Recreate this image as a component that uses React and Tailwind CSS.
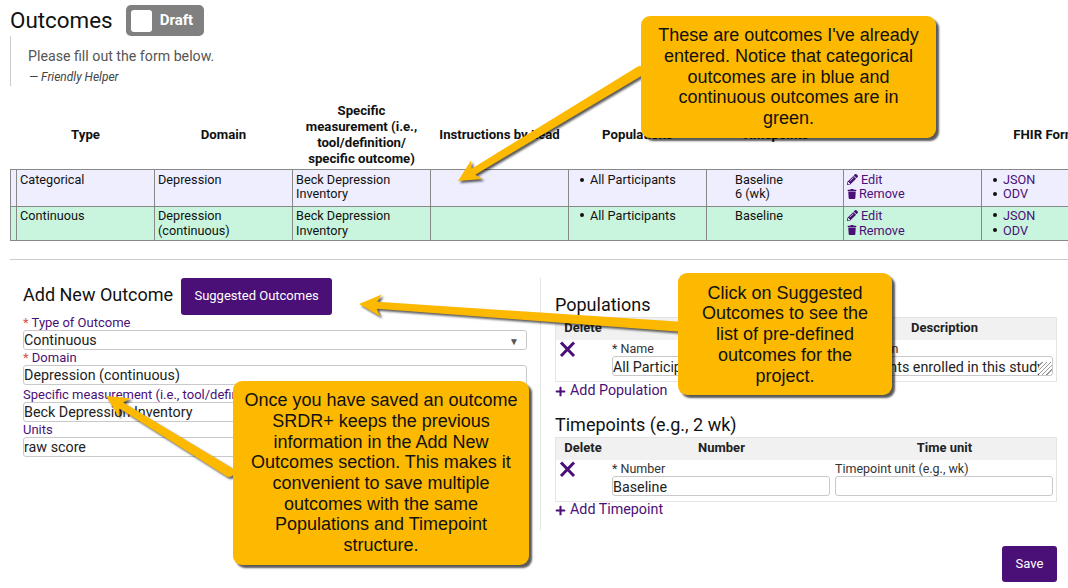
import { FaPencilAlt, FaTrash, FaPlus } from 'react-icons/fa';

const rows = [
  { type: 'Categorical', domain: ['Depression'], times: ['Baseline', '6 (wk)'], cls: 'h-[37px] bg-[#eeeeff] [&>td]:pt-[3px]' },
  { type: 'Continuous', domain: ['Depression', '(continuous)'], times: ['Baseline'], cls: 'h-[34px] bg-[#c9f5de] leading-[15px] [&>td]:pt-[1px]' },
];

// barbed arrow, drawn from the tail to the tip
function arrowPath(x1, y1, x2, y2) {
  const len = Math.hypot(x2 - x1, y2 - y1);
  const ux = (x2 - x1) / len;
  const uy = (y2 - y1) / len;
  const nx = -uy;
  const ny = ux;
  const pt = (along, side) => `${x1 + ux * along + nx * side} ${y1 + uy * along + ny * side}`;
  return `M${pt(0, -5)} L${pt(len - 18, -3.5)} L${pt(len - 22, -11)} L${pt(len, 0)} L${pt(len - 22, 11)} L${pt(len - 18, 3.5)} L${pt(0, 5)} A5 5 0 0 1 ${pt(0, -5)} Z`;
}

function Callout({ className, children }) {
  return (
    <div className={`absolute flex items-center justify-center rounded-[9px] bg-[#fcb900] text-center text-[18px] leading-[20.7px] text-[#111] shadow-[3px_3px_2px_rgba(0,0,0,0.65)] [font-family:'Liberation_Sans',sans-serif] ${className}`}>
      <div>{children}</div>
    </div>
  );
}

function Field({ label, required, value, select }) {
  return (
    <div>
      <div className="h-[13px] text-[13px] leading-[13px] text-[#4b0f78]">
        {required && <span className="text-[#d9534f]">* </span>}
        {label}
      </div>
      <div className="relative mt-[1px] flex h-[20px] items-center rounded-[3px] border border-[#c9c9c9] pt-[3px] text-[14.3px] text-[#222]">
        {value}
        {select && <span className="absolute right-[7px] top-[3px] text-[10px] text-[#555]">▼</span>}
      </div>
    </div>
  );
}

function SubTable({ cols, children }) {
  return (
    <div className="border border-[#e4e4e4]">
      <div className="grid h-[22px] grid-cols-[54px_223px_1fr] items-center bg-[#f1f1f1] pb-[1px] text-center text-[13px] font-bold text-[#222]">
        {cols.map((c) => <div key={c}>{c}</div>)}
      </div>
      <div className="grid h-[41px] grid-cols-[54px_223px_1fr]">{children}</div>
    </div>
  );
}

function SubField({ label, value, extra }) {
  return (
    <div className="pl-[2px] pr-[3px] pt-[1px]">
      <div className="h-[15px] text-[12.5px] leading-[15px] text-[#333]">{label}</div>
      <div className="relative flex h-[20px] items-center overflow-hidden whitespace-nowrap rounded-[3px] border border-[#c9c9c9] pt-[4px] text-[14.3px] text-[#222]">
        {value}
        {extra}
      </div>
    </div>
  );
}

function AddLink({ label }) {
  return (
    <div className="flex h-[17px] items-center gap-[4px] text-[14.3px] text-[#4b0f78]">
      <FaPlus size={11} />
      {label}
    </div>
  );
}

function Delete() {
  return (
    <div className="pl-[3px] pt-[1px]">
      <svg width="17" height="17" viewBox="0 0 17 17">
        <path d="M2 1.5 L15 15 M15 1.5 L2 15" stroke="#4b0f78" strokeWidth="3" fill="none" />
      </svg>
    </div>
  );
}

function Dot({ children }) {
  return (
    <div className="flex items-center gap-[6px]">
      <span className="h-[4px] w-[4px] rounded-full bg-[#111]"></span>
      {children}
    </div>
  );
}

export default function App() {
  return (
    <div className="relative h-[588px] w-[1068px] overflow-hidden bg-white text-[#111] [font-family:Roboto,sans-serif]">
      <div className="flex h-[36px] items-center pl-[10px] pt-[5px]">
        <h1 className="text-[22.4px] font-normal leading-none">Outcomes</h1>
        <div className="ml-[13px] flex h-[31px] w-[78px] items-center rounded-[5px] bg-[#808080] pl-[5px]">
          <div className="h-[22px] w-[21px] rounded-[3px] bg-white"></div>
          <span className="ml-[8px] text-[15px] font-bold text-white">Draft</span>
        </div>
      </div>

      <div className="ml-[10px] h-[50px] border-l border-[#ccc] pl-[17px] pt-[11px]">
        <p className="text-[14.2px] leading-[18px] text-[#555]">Please fill out the form below.</p>
        <p className="mt-[5px] pl-[1px] text-[12px] italic leading-[14px] text-[#444]">— Friendly Helper</p>
      </div>

      <table className="ml-[10px] mt-[16px] w-[1109px] table-fixed border-collapse text-[12.7px] leading-[14.5px]">
        <thead>
          <tr className="h-[67px] text-center text-[13.2px] font-bold leading-[16px]">
            <th className="w-[6px]"></th>
            <th className="w-[138px]">Type</th>
            <th className="w-[138px]">Domain</th>
            <th className="w-[138px] px-[4px]">Specific measurement (i.e., tool/definition/ specific outcome)</th>
            <th className="w-[138px]">Instructions by Lead</th>
            <th className="w-[138px]">Populations</th>
            <th className="w-[137px]">Timepoints</th>
            <th className="w-[138px]"></th>
            <th className="w-[138px]">FHIR Format</th>
          </tr>
        </thead>
        <tbody>
          {rows.map((r) => (
            <tr key={r.type} className={`${r.cls} [&>td]:border [&>td]:border-[#888] [&>td]:px-[3px] [&>td]:align-top`}>
              <td></td>
              <td>{r.type}</td>
              <td>{r.domain.map((d) => <div key={d}>{d}</div>)}</td>
              <td>Beck Depression<br />Inventory</td>
              <td></td>
              <td><div className="pl-[8px]"><Dot>All Participants</Dot></div></td>
              <td><div className="pl-[25px]">{r.times.map((t) => <div key={t}>{t}</div>)}</div></td>
              <td className="text-[#4b0f78]">
                <div className="flex items-center gap-[3px]"><FaPencilAlt size={11} />Edit</div>
                <div className="flex items-center gap-[2px]"><FaTrash size={10} />Remove</div>
              </td>
              <td className="text-[#4b0f78]">
                <div className="pl-[8px]"><Dot>JSON</Dot><Dot>ODV</Dot></div>
              </td>
            </tr>
          ))}
        </tbody>
      </table>

      <div className="ml-[10px] mt-[18px] h-px bg-[#ccc]"></div>

      <div className="flex pt-[18px]">
        <div className="ml-[23px] w-[504px]">
          <div className="flex h-[37px] items-center gap-[8px]">
            <h2 className="pb-[4px] text-[18px] font-normal">Add New Outcome</h2>
            <button className="h-[37px] w-[151px] rounded-[3px] bg-[#4b0f78] text-[13px] text-white">Suggested Outcomes</button>
          </div>
          <div className="mt-[1px] flex flex-col gap-[1px]">
            <Field required label="Type of Outcome" value="Continuous" select />
            <Field required label="Domain" value="Depression (continuous)" />
            <div className="mt-[2px]"><Field label="Specific measurement (i.e., tool/definition/specific outcome)" value="Beck Depression Inventory" /></div>
            <Field label="Units" value="raw score" />
          </div>
        </div>

        <div className="ml-[13px] h-[252px] border-l border-[#e4e4e4] pl-[14px]">
          <div className="w-[502px]">
            <h2 className="mt-[15px] flex h-[21px] items-end text-[18px] font-normal leading-[18px]">Populations</h2>
            <div className="mt-[3px]">
              <SubTable cols={['Delete', 'Name', 'Description']}>
                <Delete />
                <SubField label="* Name" value="All Participants" />
                <SubField
                  label="Description"
                  value={<span className="absolute right-[5px]">All participants enrolled in this study.</span>}
                  extra={<span className="absolute bottom-0 right-0 h-[13px] w-[13px] bg-[repeating-linear-gradient(135deg,#fff_0,#fff_2px,#999_2px,#999_3px)]"></span>}
                />
              </SubTable>
            </div>
            <div className="pt-[1px]"><AddLink label="Add Population" /></div>

            <h2 className="mt-[14px] h-[22px] text-[18px] font-normal leading-[22px]">Timepoints (e.g., 2 wk)</h2>
            <div className="mt-[1px]">
              <SubTable cols={['Delete', 'Number', 'Time unit']}>
                <Delete />
                <SubField label="* Number" value="Baseline" />
                <SubField label="Timepoint unit (e.g., wk)" value="" />
              </SubTable>
            </div>
            <AddLink label="Add Timepoint" />
          </div>
        </div>
      </div>

      <div className="flex justify-end pr-[11px]">
        <button className="mt-[16px] h-[36px] w-[55px] rounded-[3px] bg-[#4b0f78] text-[13px] text-white">Save</button>
      </div>

      <svg className="pointer-events-none absolute left-0 top-0 [filter:drop-shadow(2px_2px_1px_rgba(0,0,0,0.65))]" width="1068" height="588">
        <path d={arrowPath(640, 71, 458, 181)} fill="#fcb900" />
        <path d={arrowPath(684, 327, 359, 304)} fill="#fcb900" />
        <path d={arrowPath(229, 472, 106, 396)} fill="#fcb900" />
      </svg>

      <Callout className="left-[641px] top-[16px] h-[122px] w-[295px]">
        These are outcomes I've already<br />entered. Notice that categorical<br />outcomes are in blue and<br />continuous outcomes are in<br />green.
      </Callout>
      <Callout className="left-[678px] top-[273px] h-[122px] w-[214px] pt-px">
        Click on Suggested<br />Outcomes to see the<br />list of pre-defined<br />outcomes for the<br />project.
      </Callout>
      <Callout className="left-[233px] top-[381px] h-[184px] w-[296px]">
        Once you have saved an outcome<br />SRDR+ keeps the previous<br />information in the Add New<br />Outcomes section. This makes it<br />convenient to save multiple<br />outcomes with the same<br />Populations and Timepoint<br />structure.
      </Callout>
    </div>
  );
}
